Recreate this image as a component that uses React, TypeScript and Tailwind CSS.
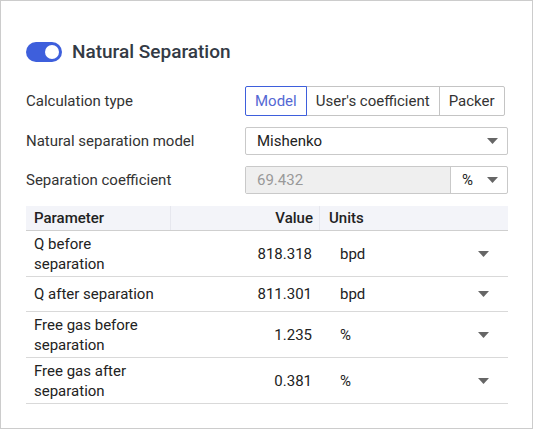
import React, { useState } from 'react';

const Caret = () => (
  <svg width="11" height="6" viewBox="0 0 11 6" className="shrink-0">
    <path d="M0 0h11L5.5 6z" fill="#666" />
  </svg>
);

const rows = [
  { name: 'Q before separation', value: '818.318', unit: 'bpd' },
  { name: 'Q after separation', value: '811.301', unit: 'bpd' },
  { name: 'Free gas before separation', value: '1.235', unit: '%' },
  { name: 'Free gas after separation', value: '0.381', unit: '%' },
];

export default function App() {
  const [enabled, setEnabled] = useState(true);
  const [calc, setCalc] = useState('Model');

  return (
    <div
      className="w-[533px] h-[429px] border border-[#cccccc] bg-white text-[#333] text-[15px] pl-[25px] pt-[40px]"
      style={{ fontFamily: 'Roboto, "Liberation Sans", sans-serif' }}
    >
      {/* Header */}
      <div className="flex items-center gap-[10px] h-[21px]">
        <button
          onClick={() => setEnabled(!enabled)}
          className={`w-[36px] h-[20px] rounded-full flex items-center px-[3px] ${
            enabled ? 'bg-[#3e5fdc] justify-end' : 'bg-[#bbb] justify-start'
          }`}
        >
          <span className="w-[14px] h-[14px] rounded-full bg-white" />
        </button>
        <h2 className="text-[19px] font-medium text-[#333a45] leading-none">Natural Separation</h2>
      </div>

      {/* Form */}
      <div className="mt-[24px] flex flex-col gap-[11px] w-[482px]">
        <div className="flex items-center h-[30px]">
          <span className="w-[219px] shrink-0">Calculation type</span>
          <div className="flex h-[30px]">
            {['Model', "User's coefficient", 'Packer'].map((o, i) => (
              <button
                key={o}
                onClick={() => setCalc(o)}
                className={`px-[9px] border ${i === 0 ? 'rounded-l-[2px]' : '-ml-px'} ${
                  i === 2 ? 'rounded-r-[2px]' : ''
                } ${
                  calc === o
                    ? 'border-[#3e5fdc] text-[#5468d4] relative z-10'
                    : 'border-[#c4c4c4] text-[#333]'
                }`}
              >
                {o}
              </button>
            ))}
          </div>
        </div>

        <div className="flex items-center h-[28px]">
          <span className="w-[219px] shrink-0">Natural separation model</span>
          <div className="flex-1 h-[28px] border border-[#c9c9c9] rounded-[2px] flex items-center justify-between pl-[11px] pr-[9px] text-[#222]">
            <span>Mishenko</span>
            <Caret />
          </div>
        </div>

        <div className="flex items-center h-[28px]">
          <span className="w-[219px] shrink-0">Separation coefficient</span>
          <div className="flex-1 h-[28px] border border-[#c9c9c9] rounded-[2px] flex">
            <div className="w-[205px] bg-[#efefef] flex items-center pl-[11px] text-[#999] border-r border-[#c9c9c9]">
              69.432
            </div>
            <div className="flex-1 flex items-center justify-between pl-[11px] pr-[9px] text-[#222]">
              <span>%</span>
              <Caret />
            </div>
          </div>
        </div>
      </div>

      {/* Table */}
      <div className="mt-[12px] w-[482px]">
        <div className="flex h-[25px] bg-[#f3f4f9] border-b border-[#cfcfcf] font-medium text-[#222]">
          <div className="w-[145px] pl-[8px] flex items-center border-r border-[#e6e7ee]">Parameter</div>
          <div className="w-[149px] pr-[6px] flex items-center justify-end border-r border-[#e6e7ee]">Value</div>
          <div className="flex-1 pl-[9px] flex items-center">Units</div>
        </div>
        {rows.map((r) => (
          <div key={r.name} className="flex min-h-[35px] border-b border-[#d9d9d9] text-[#222] leading-[20px]">
            <div className="w-[145px] pl-[8px] pr-[8px] py-[2.5px] flex items-center">{r.name}</div>
            <div className="w-[149px] pr-[8px] flex items-center justify-end">{r.value}</div>
            <div className="flex-1 pl-[20px] pr-[19px] flex items-center justify-between">
              <span>{r.unit}</span>
              <Caret />
            </div>
          </div>
        ))}
      </div>
    </div>
  );
}
